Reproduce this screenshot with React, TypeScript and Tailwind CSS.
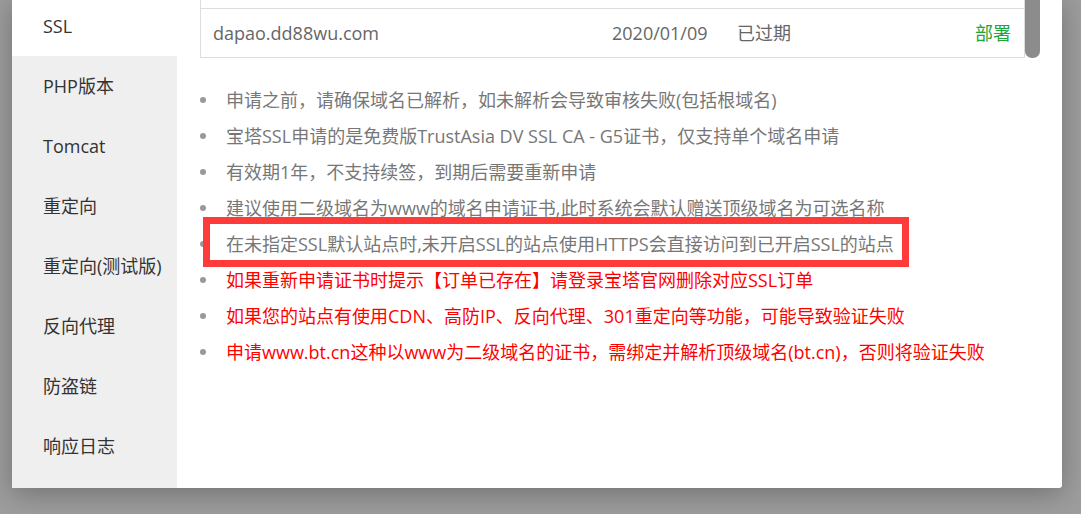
import React from "react";

const font = { fontFamily: '"Open Sans", "Noto Sans CJK SC", sans-serif' };

const menu = ["SSL", "PHP版本", "Tomcat", "重定向", "重定向(测试版)", "反向代理", "防盗链", "响应日志"];

const tips: { text: string; red?: boolean }[] = [
  { text: "申请之前，请确保域名已解析，如未解析会导致审核失败(包括根域名)" },
  { text: "宝塔SSL申请的是免费版TrustAsia DV SSL CA - G5证书，仅支持单个域名申请" },
  { text: "有效期1年，不支持续签，到期后需要重新申请" },
  { text: "建议使用二级域名为www的域名申请证书,此时系统会默认赠送顶级域名为可选名称" },
  { text: "在未指定SSL默认站点时,未开启SSL的站点使用HTTPS会直接访问到已开启SSL的站点" },
  { text: "如果重新申请证书时提示【订单已存在】请登录宝塔官网删除对应SSL订单", red: true },
  { text: "如果您的站点有使用CDN、高防IP、反向代理、301重定向等功能，可能导致验证失败", red: true },
  { text: "申请www.bt.cn这种以www为二级域名的证书，需绑定并解析顶级域名(bt.cn)，否则将验证失败", red: true },
];

const App = () => {
  return (
    <div className="w-[1081px] h-[514px] overflow-hidden bg-[#9d9d9d]" style={font}>
      <div className="ml-[12px] mt-[-4px] w-[1050px] h-[492px] bg-white flex rounded-br-[3px] shadow-[0_6px_28px_rgba(0,0,0,0.28)]">
        <div className="w-[165px] bg-[#efefef] flex flex-col">
          {menu.map((m, i) => (
            <div
              key={m}
              className={`h-[60px] pl-[31px] flex items-center text-[18px] text-[#333] ${i === 0 ? "bg-white" : ""}`}
            >
              {m}
            </div>
          ))}
        </div>
        <div className="flex-1 relative pl-[23px] pr-[37px]">
          <div className="h-[12px] border-x border-[#ddd]" />
          <div className="h-[50px] border border-[#ddd] flex items-center pl-[12px] pr-[13px] text-[18px] text-[#666]">
            <span className="w-[399px]">dapao.dd88wu.com</span>
            <span className="w-[125px]">2020/01/09</span>
            <span className="flex-1">已过期</span>
            <span className="text-[#20a53a]">部署</span>
          </div>
          <ul className="mt-[24px]">
            {tips.map((t) => (
              <li
                key={t.text}
                className={`h-[36px] flex items-center text-[18px] whitespace-nowrap ${t.red ? "text-[#ff0000]" : "text-[#777]"}`}
              >
                <span className="w-[6px] h-[6px] rounded-full bg-[#999] mr-[20px] shrink-0" />
                {t.text}
              </li>
            ))}
          </ul>
          <div className="absolute left-[26px] top-[221px] w-[706px] h-[50px] border-[7px] border-[#fd3b3b]" />
          <div className="absolute left-[848px] top-0 w-[15px] h-[62px] rounded-b-[7px] bg-[#8c8c8c]" />
        </div>
      </div>
    </div>
  );
};

export default App;
